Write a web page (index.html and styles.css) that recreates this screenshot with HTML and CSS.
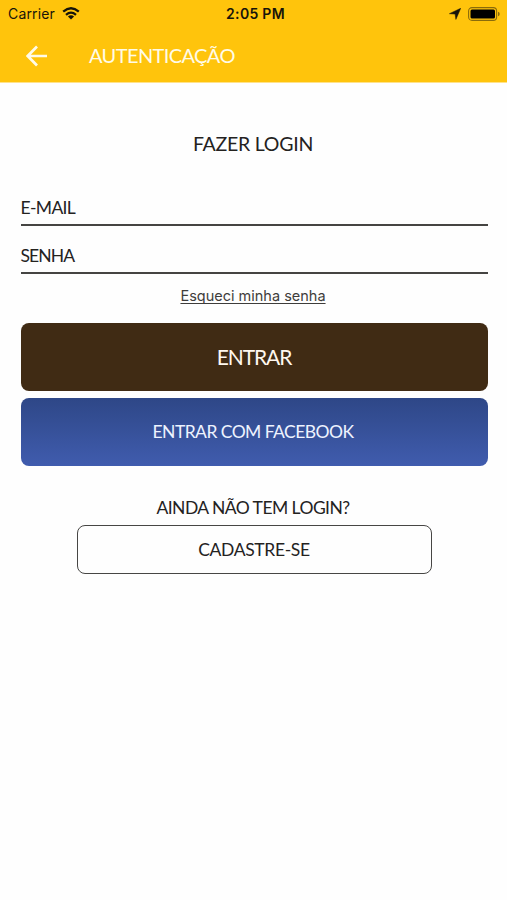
FILE: index.html
```html
<!DOCTYPE html>
<html lang="pt-BR">
<head>
<meta charset="utf-8">
<title>Autenticação</title>
<link rel="stylesheet" href="styles.css">
</head>
<body>
<header class="header">
  <div class="status">
    <div class="carrier"><span>Carrier</span>
      <svg class="wifi" viewBox="0 0 18 13" width="18" height="13"><g fill="none" stroke="#17140a" stroke-width="2.3"><path d="M1.2 4.6Q9-2.1 16.8 4.6"/><path d="M4 7.8Q9 3.5 14 7.8"/></g><path fill="#17140a" d="M5.9 9.4Q9 7 12.1 9.4L9 12.6z"/></svg>
    </div>
    <time class="clock">2:05 PM</time>
    <div class="indicators">
      <svg viewBox="0 0 12 12" width="12" height="12"><path fill="#17140a" stroke="#17140a" stroke-width=".5" d="M11.7.3 6.9 11.4 6.1 6.1.4 5.7z"/></svg>
      <svg viewBox="0 0 32 14" width="32" height="14"><rect x=".6" y=".6" width="28" height="12.8" rx="3.4" fill="none" stroke="#8a6b0b" stroke-width="1.1"/><rect x="2.5" y="2.5" width="24.5" height="9" rx="1.5"/><path d="M30 4.8q1.7.4 1.7 2.2T30 9.2z" fill="#8a6b0b"/></svg>
    </div>
  </div>
  <div class="navbar">
    <svg class="back" viewBox="0 0 22 22" width="22" height="22"><path d="M11 1.5 1.7 11 11 20.5M2 11H21" fill="none" stroke="#fffbe8" stroke-width="2.7"/></svg>
    <h1 class="page-title">AUTENTICAÇÃO</h1>
  </div>
</header>
<main class="content">
  <h2 class="heading">FAZER LOGIN</h2>
  <form class="form">
    <label class="field email">E-MAIL</label>
    <label class="field password">SENHA</label>
    <a class="forgot">Esqueci minha senha</a>
    <button type="button" class="button primary">ENTRAR</button>
    <button type="button" class="button facebook">ENTRAR COM FACEBOOK</button>
  </form>
  <p class="question">AINDA NÃO TEM LOGIN?</p>
  <button type="button" class="button register">CADASTRE-SE</button>
</main>
</body>
</html>
```
FILE: styles.css
```css
* { box-sizing: border-box; }
body { margin: 0; background: #fefefe; color: #24221f; font-family: Lato, sans-serif; }
h1, h2, p { margin: 0; font-weight: 400; }
.header { height: 83px; background: #ffc40c; border-bottom: 1px solid #ffe28a; }
.status { height: 28px; display: grid; grid-template-columns: 1fr auto 1fr; align-items: center; padding: 0 7px 0 8px; font: 14px/28px Inter, sans-serif; color: #17140a; }
.carrier { display: flex; align-items: center; gap: 7px; letter-spacing: .15px; }
.wifi { margin-top: -2px; }
.clock { font-weight: 600; letter-spacing: .3px; padding-left: 3px; }
.indicators { display: flex; align-items: center; justify-content: flex-end; gap: 7px; margin-top: -1px; }
.navbar { height: 54px; display: flex; align-items: center; padding-left: 26px; }
.back { margin-top: 2px; }
.page-title { margin-left: 41px; font-size: 20px; line-height: 24px; color: #fffbe8; letter-spacing: -.6px; }
.content { display: flex; flex-direction: column; align-items: center; padding: 49px 19.5px 0 20.5px; }
.heading { padding-right: 2px; font-size: 19.5px; line-height: 24px; letter-spacing: -.25px; }
.form { width: 100%; display: flex; flex-direction: column; align-items: center; padding-top: 30px; }
.field { flex: none; width: 100%; border-bottom: 1.5px solid #454442; border-bottom-width: 2px; font-size: 17.5px; line-height: 24px; }
.email { height: 40px; padding-top: 10px; letter-spacing: -.65px; }
.password { height: 48px; padding-top: 18px; letter-spacing: -.9px; }
.forgot { margin: 12px 2px 0 0; font: 14.5px/20px Inter, sans-serif; color: #3e3d3b; text-decoration: underline; text-underline-offset: 2px; text-decoration-skip-ink: none; }
.button { display: flex; align-items: center; justify-content: center; width: 100%; height: 68px; padding: 0; border: 0; border-radius: 8px; font-family: inherit; color: #fff8ef; }
.primary { margin-top: 17px; padding-bottom: 2px; background: #402b14; font-size: 21px; letter-spacing: -1.1px; }
.facebook { margin-top: 7px; padding: 0 2px 1px 0; background: linear-gradient(#2e4787, #405cae); font-size: 17.5px; color: #eef3ff; letter-spacing: -.55px; }
.question { margin-top: 30px; padding-right: 2px; font-size: 17.5px; line-height: 24px; letter-spacing: -.55px; }
.register { width: 355px; height: 49px; margin-top: 5px; border: 1.5px solid #474644; background: transparent; color: #24221f; font-size: 17.5px; letter-spacing: -.35px; }
```
